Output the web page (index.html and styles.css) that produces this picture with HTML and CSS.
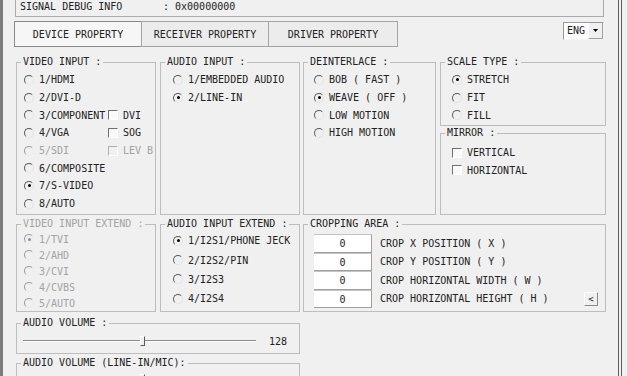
FILE: index.html
```html
<!DOCTYPE html>
<html lang="en">
<head>
    <meta charset="UTF-8">
    <meta name="viewport" content="width=device-width, initial-scale=1.0">
    <title>Device Property</title>
    <link rel="stylesheet" href="styles.css">
</head>
<body>
<div class="frame">
<div class="window">

    <div class="info">
        <span class="info-label">SIGNAL DEBUG INFO</span><span>: 0x00000000</span>
    </div>

    <div class="toolbar">
        <div class="tabs">
            <button class="tab active">DEVICE PROPERTY</button>
            <button class="tab">RECEIVER PROPERTY</button>
            <button class="tab wide">DRIVER PROPERTY</button>
        </div>
        <div class="combo">
            <span class="combo-text">ENG</span>
            <span class="combo-btn">
                <svg width="5" height="3" viewBox="0 0 5 3"><path d="M0 0H5L2.5 3Z" fill="#000"/></svg>
            </span>
        </div>
    </div>

    <!-- row 1 -->
    <div class="row row-1">
        <fieldset class="group col-a">
            <legend>VIDEO INPUT :</legend>
            <div class="gbody pad-left-a">
                <div class="item"><span class="radio"></span>1/HDMI</div>
                <div class="item"><span class="radio"></span>2/DVI-D</div>
                <div class="item"><span class="opt"><span class="radio"></span>3/COMPONENT</span><span class="check"></span>DVI</div>
                <div class="item"><span class="opt"><span class="radio"></span>4/VGA</span><span class="check"></span>SOG</div>
                <div class="item disabled"><span class="opt"><span class="radio"></span>5/SDI</span><span class="check"></span>LEV B</div>
                <div class="item"><span class="radio"></span>6/COMPOSITE</div>
                <div class="item"><span class="radio on"></span>7/S-VIDEO</div>
                <div class="item"><span class="radio"></span>8/AUTO</div>
            </div>
        </fieldset>

        <fieldset class="group col-b">
            <legend>AUDIO INPUT :</legend>
            <div class="gbody pad-left-b">
                <div class="item"><span class="radio"></span>1/EMBEDDED AUDIO</div>
                <div class="item"><span class="radio on"></span>2/LINE-IN</div>
            </div>
        </fieldset>

        <fieldset class="group col-c">
            <legend>DEINTERLACE :</legend>
            <div class="gbody pad-left-c">
                <div class="item"><span class="radio"></span>BOB ( FAST )</div>
                <div class="item"><span class="radio on"></span>WEAVE ( OFF )</div>
                <div class="item"><span class="radio"></span>LOW MOTION</div>
                <div class="item"><span class="radio"></span>HIGH MOTION</div>
            </div>
        </fieldset>

        <div class="side col-d">
            <fieldset class="group scale">
                <legend>SCALE TYPE :</legend>
                <div class="gbody pad-left-d">
                    <div class="item"><span class="radio on"></span>STRETCH</div>
                    <div class="item"><span class="radio"></span>FIT</div>
                    <div class="item"><span class="radio"></span>FILL</div>
                </div>
            </fieldset>
            <fieldset class="group mirror">
                <legend>MIRROR :</legend>
                <div class="gbody pad-left-d mirror-body">
                    <div class="item short"><span class="check"></span>VERTICAL</div>
                    <div class="item short"><span class="check"></span>HORIZONTAL</div>
                </div>
            </fieldset>
        </div>
    </div>

    <!-- row 2 -->
    <div class="row row-2">
        <fieldset class="group col-a disabled">
            <legend>VIDEO INPUT EXTEND :</legend>
            <div class="gbody pad-left-a ext-body">
                <div class="item tight"><span class="radio on"></span>1/TVI</div>
                <div class="item tight"><span class="radio"></span>2/AHD</div>
                <div class="item tight"><span class="radio"></span>3/CVI</div>
                <div class="item tight"><span class="radio"></span>4/CVBS</div>
                <div class="item tight"><span class="radio"></span>5/AUTO</div>
            </div>
        </fieldset>

        <fieldset class="group col-b">
            <legend>AUDIO INPUT EXTEND :</legend>
            <div class="gbody pad-left-b ext-body">
                <div class="item loose"><span class="radio on"></span>1/I2S1/PHONE JECK</div>
                <div class="item loose"><span class="radio"></span>2/I2S2/PIN</div>
                <div class="item loose"><span class="radio"></span>3/I2S3</div>
                <div class="item loose"><span class="radio"></span>4/I2S4</div>
            </div>
        </fieldset>

        <fieldset class="group col-wide">
            <legend>CROPPING AREA :</legend>
            <div class="gbody crop-body">
                <div class="crop-row"><span class="num">0</span>CROP X POSITION ( X )</div>
                <div class="crop-row"><span class="num">0</span>CROP Y POSITION ( Y )</div>
                <div class="crop-row"><span class="num">0</span>CROP HORIZONTAL WIDTH ( W )</div>
                <div class="crop-row"><span class="num">0</span>CROP HORIZONTAL HEIGHT ( H )<button class="small-btn">&lt;</button></div>
            </div>
        </fieldset>
    </div>

    <!-- row 3 -->
    <div class="row row-3">
        <fieldset class="group col-vol">
            <legend>AUDIO VOLUME :</legend>
            <div class="gbody vol-body">
                <div class="slider">
                    <div class="track"></div>
                    <div class="thumb" style="left: 117px;"></div>
                </div>
                <span class="value">128</span>
            </div>
        </fieldset>
    </div>

    <!-- row 4, runs past the window edge -->
    <div class="row row-4">
        <fieldset class="group col-vol">
            <legend>AUDIO VOLUME (LINE-IN/MIC):</legend>
            <div class="gbody vol-body vol-low">
                <div class="slider">
                    <div class="track"></div>
                    <div class="thumb" style="left: 117px;"></div>
                </div>
            </div>
        </fieldset>
    </div>

</div>
</div>
</body>
</html>
```

FILE: styles.css
```css
html, body { margin: 0; height: 100%; overflow: hidden; }
body { background: #f0f0f0; font-family: "DejaVu Sans Mono", "Liberation Mono", monospace; font-size: 10px; color: #222; }

.frame { width: 622px; height: 376px; box-sizing: border-box; border-right: 1px solid #5e5e5e; padding-right: 2px; }
.window { height: 100%; box-sizing: border-box; border-left: 3px solid #7c7c7c; border-right: 1px solid #5e5e5e; }

/* top info line */
.info { height: 16px; margin: 0 14px 0 12px; border: 1px solid #ababab; border-top: none; padding-left: 4px; line-height: 14px; }
.info-label { display: inline-block; width: 143px; }

/* tab buttons + language box */
.toolbar { display: flex; align-items: flex-start; margin-top: 4px; padding: 0 14px 0 11px; }
.tabs { display: flex; }
.tab { width: 128px; height: 26px; margin: 0; padding: 0; font: inherit; color: inherit; background: #ececec; border: 1px solid #a4a4a4; }
.tab + .tab { margin-left: -1px; }
.tab.active { background: #f6f6f6; border-color: #8a8a8a; }
.tab.wide { width: 130px; }

.combo { display: flex; margin: 1px 0 0 auto; width: 41px; height: 18px; box-sizing: border-box; background: #fff; border: 1px solid; border-color: #9a9a9a #f4f4f4 #f4f4f4 #9a9a9a; }
.combo-text { flex: 1; padding-left: 3px; line-height: 16px; }
.combo-btn { display: flex; align-items: center; justify-content: center; width: 15px; background: #f0f0f0; border-left: 1px solid #fff; border-right: 1px solid #a0a0a0; border-bottom: 1px solid #a0a0a0; box-sizing: border-box; }

/* group boxes */
.row { display: flex; padding-left: 13px; }
.row-1 { margin-top: 9px; height: 159px; }
.row-2 { margin-top: 3px; height: 94px; }
.row-3 { margin-top: 5px; height: 37px; }
.row-4 { margin-top: 3px; height: 60px; }

.group { margin: 0; padding: 0; min-width: 0; box-sizing: border-box; border: 1px solid #bdbdbd; }
.group legend { margin-left: 4px; padding: 0 2px; line-height: 12px; }
.group.disabled, .item.disabled { color: #a3a3a3; }

.col-a { width: 140px; }
.col-b { width: 140px; margin-left: 4px; }
.col-c { width: 133px; margin-left: 3px; }
.col-d { width: 166px; margin-left: 4px; }
.col-wide { width: 303px; margin-left: 3px; }
.col-vol { width: 284px; }

.side { display: flex; flex-direction: column; }
.scale { height: 70px; }
.mirror { height: 88px; margin-top: 1px; }

.gbody { padding-top: 3px; }
.pad-left-a { padding-left: 7px; }
.pad-left-b { padding-left: 12px; }
.pad-left-c { padding-left: 10px; }
.pad-left-d { padding-left: 11px; }
.mirror-body { padding-top: 5px; }
.ext-body { padding-top: 1px; }

.item { display: flex; align-items: center; height: 17.7px; white-space: nowrap; }
.item.short { height: 17.5px; }
.item.tight { height: 16px; }
.item.loose { height: 19.4px; }
.opt { display: flex; align-items: center; width: 84px; }

/* classic radio / checkbox */
.radio { display: inline-flex; align-items: center; justify-content: center; flex: none; width: 10px; height: 10px; margin-right: 5px; box-sizing: border-box; border: 1px solid; border-color: #5a5a5a #e4e4e4 #e4e4e4 #5a5a5a; border-radius: 50%; }
.radio.on::after { content: ""; width: 3px; height: 3px; border-radius: 50%; background: #000; }
.disabled .radio { border-color: #9c9c9c #ececec #ececec #9c9c9c; }
.disabled .radio.on::after { background: #8c8c8c; }

.check { flex: none; width: 10px; height: 10px; margin-right: 5px; box-sizing: border-box; background: #fafafa; border: 1px solid; border-color: #707070 #ffffff #ffffff #707070; }
.disabled .check { border-color: #b0b0b0 #fff #fff #b0b0b0; background: #f0f0f0; }

/* cropping area */
.crop-body { padding: 4px 0 0 10px; }
.crop-row { display: flex; align-items: center; height: 18.5px; white-space: nowrap; }
.num { width: 58px; height: 100%; margin-right: 8px; box-sizing: border-box; background: #fff; text-align: center; line-height: 17px; border-top: 1px solid #c4c4c4; border-right: 1px solid #a0a0a0; border-bottom: 1px solid #a0a0a0; }
.small-btn { width: 14px; height: 14px; margin: 0 7px 0 auto; padding: 0; font: inherit; font-size: 9px; line-height: 10px; color: #222; background: #f0f0f0; box-sizing: border-box; border: 1px solid; border-color: #fff #8a8a8a #8a8a8a #fff; }

/* volume sliders */
.vol-body { display: flex; align-items: center; height: 24px; padding: 0 0 0 6px; }
.vol-low { margin-top: -2px; }
.slider { position: relative; display: flex; align-items: center; width: 233px; height: 100%; }
.track { width: 100%; height: 1px; background: #8a8a8a; border-bottom: 1px solid #fff; }
.thumb { position: absolute; top: 7px; width: 5px; height: 10px; box-sizing: border-box; background: #f0f0f0; border: 1px solid; border-color: #fff #5a5a5a #5a5a5a #fff; }
.value { margin-left: 13px; }
```
